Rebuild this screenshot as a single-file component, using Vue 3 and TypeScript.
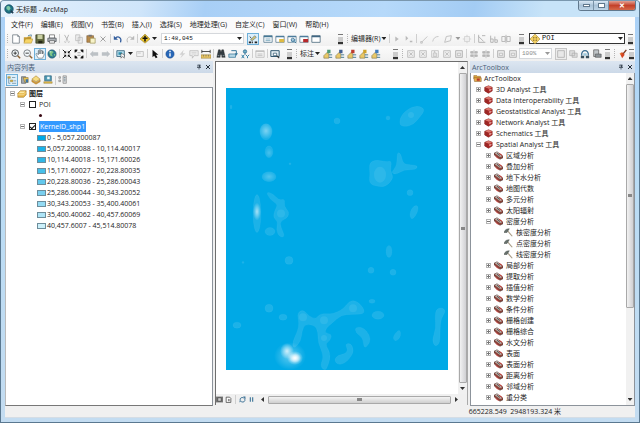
<script setup lang="ts">
import { h, ref } from 'vue'

// Each shape: [path data, fill, stroke, stroke width]
type Shape = [string, string, string?, number?]

const G = '#b9b9b9'
const cyl = (c: string): Shape[] => [
  ['M1 3h10v7H1z', '#fff', '#6b8799', 1],
  ['M1 2h10v2H1z', '#4d7c9c'],
  ['M5 6h6v4H5z', c],
]
const label = (c: string): Shape[] => [
  ['M1 8l4-4 2 2v5H1z', '#e9c867', '#80754d', 0.7],
  ['M5 1h4v4H5z', c],
  ['M7 7h4M7 10h4', 'none', '#4f7f96', 1.2],
]
const greyBox: Shape[] = [
  ['M2 2h8v8H2z', '#ededed', G, 1],
  ['M4 4l4 4M8 4L4 8', 'none', G, 1],
]
const icons: Record<string, Shape[]> = {
  new: [['M2 1h6l2 2v8H2z', '#fff', '#68727c', 0.9], ['M8 1v2h2', 'none', '#68727c', 0.8]],
  open: [['M1 4h4l1-1h4v7H1z', '#c59a30'], ['M3 6h9l-2 5H1z', '#f7d566', '#a3822d', 0.5], ['M6 2l4-1v2', 'none', '#3f7796', 0.9]],
  save: [['M1 1h10v10H1z', '#626a3f', '#35391f', 0.8], ['M3 1h6v5H3z', '#c9cfa2'], ['M4 8h5v3H4z', '#262817']],
  print: [['M3 1h6v4H3z', '#fff', '#555', 0.8], ['M1 5h10v4H1z', '#aeb3b8', '#4c5258', 0.9], ['M3 8h6v3H3z', '#f5f5f5', '#555', 0.8]],
  cut: [['M3 1l4 7M8 1L5 8', 'none', G, 1.2], ['M3 9a1 1 0 1 0 2 0M7 9a1 1 0 1 0 2 0', 'none', G, 1]],
  copy: [['M2 1h5v7H2zM5 4h5v7H5z', '#eee', G, 0.9]],
  paste: [['M1 2h8v8H1z', '#b88a4b', '#7a5a30', 0.7], ['M3 1h4v2H3z', '#777'], ['M5 5h6v6H5z', '#f7f3c9', '#8c803e', 0.7]],
  delete: [['M3 3l6 6M9 3L3 9', 'none', '#9a9a9a', 1.1]],
  undo: [['M3 5c3-3 8-1 6 5', 'none', '#335e9e', 1.5], ['M1 2v5h5z', '#335e9e']],
  redo: [['M9 5c-3-3-8-1-6 5', 'none', G, 1.2], ['M11 2v5H6z', G]],
  add: [['M6 0l6 6-6 5-6-5z', '#edc52c', '#735e1a', 0.5], ['M6 2v7M3 5h6', 'none', '#111', 1.8]],
  edit: [['M1 10h3M5 10h1M8 10h3', 'none', '#222', 2], ['M3 7l5-5 2 2-5 4z', '#d4c273', '#57717d', 0.7], ['M2 3l2 2', 'none', '#222', 1]],
  table: [['M1 2h10v8H1z', '#fff', '#5f8298', 1], ['M1 2h10v2H1z', '#447795'], ['M3 6h6M3 8h6', 'none', '#6c9eb5', 1]],
  catalog: cyl('#e0bb42'),
  search: [...cyl('#a9cbdc'), ['M5 7a2 2 0 1 0 4 0a2 2 0 1 0-4 0M9 9l2 2', 'none', '#356d93', 1]],
  toolbox: cyl('#b7292b'),
  python: [['M1 2h10v8H1z', '#fff', '#516f82', 1], ['M1 2h10v2H1z', '#3f6682']],
  zoomin: [['M1 5a4 4 0 1 0 8 0a4 4 0 1 0-8 0', '#f2f7f9', '#4d5155', 1.1], ['M8 8l3 3', 'none', '#8b6233', 1.8], ['M5 3v4M3 5h4', 'none', '#222', 1]],
  zoomout: [['M1 5a4 4 0 1 0 8 0a4 4 0 1 0-8 0', '#f2f7f9', '#6b6f73', 1], ['M8 8l3 3', 'none', '#8b6233', 1.8], ['M3 5h4', 'none', '#222', 1]],
  pan: [['M4 11L1 6l1-1 2 2V2h1v4V1h2v5V2h2v4V3h1l1 4-2 4z', '#fff', '#505b63', 0.7]],
  globe: [['M1 6a5 5 0 1 0 10 0a5 5 0 1 0-10 0', '#2f7c8f', '#1c4c6b', 0.6], ['M3 3l3-1 2 2-2 2 1 3-3-1-1-3zM8 6l2 0-1 3z', '#7cc486'], ['M3 3h2v1H3z', '#eef8f8']],
  fixin: [['M1 1l3 3M11 1L8 4M1 11l3-3M11 11L8 8', 'none', '#222', 1.2], ['M5 2v3H2zM7 2v3h3zM5 10V7H2zM7 10V7h3z', '#111']],
  fixout: [['M1 4V1h3L3 3zM11 4V1H8l1 2zM1 8v3h3L3 9zM11 8v3H8l1-2z', '#111', '#111', 0.5], ['M5 4v1M7 4v1M5 8v-1M7 8v-1', 'none', '#333', 0.9]],
  back: [['M1 6l4-4v2h6v4H5v2z', '#bcc1c5']],
  fwd: [['M11 6L7 2v2H1v4h6v2z', '#bcc1c5']],
  select: [['M1 2h9v7H1z', '#b4dbea', '#35647e', 1], ['M3 4h4v3H3z', '#2e90ad'], ['M6 5v6l2-2 2 2V7z', '#fff', '#333', 0.6]],
  clear: [['M2 3h8v6H2z', '#f2f2f2', G, 0.9], ['M3 4h4v2H3z', '#ddd']],
  cursor: [['M3 1v9l2-2 2 3 2-1-2-3h3z', '#111']],
  info: [['M1 6a5 5 0 1 0 10 0a5 5 0 1 0-10 0', '#2867b7', '#194684', 0.5], ['M6 5v4M6 2v2', 'none', '#fff', 1.7]],
  bolt: [['M8 1L3 7h3l-2 4 6-6H7z', '#d2d2d2']],
  popup: [['M1 2h10v6H6l-2 3V8H1z', '#f0f0f0', G, 0.9], ['M3 4h6M3 6h6', 'none', G, 0.6]],
  measure: [['M0 7h12v4H0z', '#e7c465', '#8f7737', 0.6], ['M1 3h10M1 1v4M11 1v4', 'none', '#333', 1], ['M3 7v2M6 7v2M9 7v2', 'none', '#665', 0.7]],
  find: [['M3 1h2l1 3 1-3h2l2 9H7V7H5v3H1z', '#333c42', '#222', 0.5], ['M2 8h2M8 8h2', 'none', '#91a2ab', 1]],
  route: [['M1 6h8v4H1z', '#b7d8e6', '#39789b', 0.9], ['M4 2h6v4', 'none', '#39789b', 1.2], ['M8 5h4l-2 3z', '#39789b']],
  xy: [['M4 3a2 2 0 1 0 4 0a2 2 0 1 0-4 0M6 5v2', '#6fb0cb', '#326e8f', 1], ['M2 7l3 4M5 7l-3 4M7 7l2 2 2-2M9 9v2', 'none', '#2576a0', 1.1]],
  time: [['M1 2h10v8H1z', '#f4f4f4', G, 0.9], ['M1 3h10M3 6h6M3 8h6', 'none', G, 1]],
  viewer: [['M1 2h10v7H1z', '#e7f1f5', '#345a72', 1.2], ['M4 5h4v3H4z', '#fff', '#345a72', 0.9], ['M8 8l3 3', 'none', '#333', 1.3]],
  lab1: label('#4d9b76'), lab2: label('#415f93'), lab3: label('#bd3b2e'), lab4: label('#cfa42b'), lab5: label('#3e7bbd'),
  gplay: [['M4 3v6l4-3z', G]],
  gplay2: [['M2 2v6l3-3z', G], ['M7 8h3v2H7z', G]],
  gline: [['M3 10L10 3M2 9h2v2H2z', 'none', '#c4c4c4', 1.1]],
  garc: [['M2 9c1-4 3-6 7-6', 'none', '#c4c4c4', 1.1]],
  gpoly: [['M2 10l2-7 6-1-1 6z', 'none', G, 1]],
  gpoint: [['M6 1v10M1 6h10', 'none', '#ccc', 1], ['M3 3h6v6H3z', '#eee', '#ccc', 0.8]],
  gverts: [['M2 1v9h8M2 3l6 6M6 2h4', 'none', '#aaa', 1]],
  gsplit: [['M2 2v8h3V6H2M7 3v7h3V7H7', 'none', '#aaa', 1]],
  gcut: [['M1 3h4v6H1zM7 3h4v6H7zM6 1v10', 'none', '#b0b0b0', 1]],
  gbox: greyBox,
  ghand: [['M2 2h8v8H2z', 'none', G, 0.9], ['M4 9V5h1V3h1v2h2v4z', '#e0e0e0', G, 0.8]],
  gframe: [['M2 2h8v8H2z', '#eee', '#aaa', 1], ['M4 5h4v3H4z', 'none', G, 1]],
  ggrid: [['M2 3h3v2H2zM7 3h3v2H7zM2 7h3v2H2zM7 7h3v2H7zM6 1v10', '#bbb', '#aaa', 0.7]],
  focus: [['M2 2h8v8H2z', '#e8e8e8', '#b0b0b0', 1]],
  layout: [['M2 2h6v6H2zM5 5h6v5H5z', '#ddd', '#aaa', 0.8]],
  driven: [['M2 8c-1-8 9-8 8 0', 'none', '#3b6f91', 1.5], ['M1 8h4v3H1zM7 8h4v3H7z', '#39505e'], ['M4 5h4v3H4z', '#9bc6d9']],
  page: [['M2 1h6v8H2z', '#c0c5c8', '#555', 0.8], ['M4 6h7v4H4z', '#8d9498', '#555', 0.7]],
  brush: [['M10 1L6 6', 'none', '#7f3c22', 1.6], ['M2 5l3-1 3 3-3 4z', '#d54420'], ['M2 5l2 0 0 2z', '#efb044']],
  tree: [['M1 2h3v2H1zM4 6h3v2H4z', '#d9b44a', '#8e7634', 0.5], ['M2 4v6h2M6 3h4M8 7h3M6 10h5', 'none', '#607f91', 0.8]],
  cylinder: [['M3 2h5v8H3z', '#a2a8ae', '#555d66', 0.8], ['M5 3h6v6H7z', '#e6c052', '#80682a', 0.6], ['M8 5h3v4H8z', '#3a74a8']],
  visible: [['M1 5l5-4 5 4-5 3z', '#f6dc80', '#a8822d', 0.7], ['M1 6l5 3 5-3v2l-5 3-5-3z', '#d99e34', '#94682a', 0.5]],
  selection: [['M2 1h8v6H2z', '#4f9cb5', '#2b5e78', 0.8], ['M1 8h10v2H1z', '#e2bc46', '#866e2e', 0.5], ['M5 2h3v3H5z', '#e9f7fb']],
  options: [['M1 2h2v2H1zM1 6h2v2H1zM6 1h4v9H6z', '#ddd', '#777', 0.7], ['M7 3h2M7 5h2M7 7h2', 'none', '#49677a', 0.7]],
  layers: [['M1 5l3-3h7v5l-3 3H1z', '#e6b445', '#956c1f', 0.6], ['M2 5l2-2h6L8 5z', '#fbe9a6'], ['M1 7h7l3-3', 'none', '#fff1bd', 0.8]],
  boxes: [['M1 2h4l1 1h4v3H1z', '#d8a33c', '#7c4a1e', 0.5], ['M1 5h10v5H2z', '#e4b14b', '#7c4a1e', 0.6], ['M5 6h4v3H5z', '#b9362a']],
  box: [['M1 3l5-2 5 2v5l-5 3-5-3z', '#b32d2b', '#6d1917', 0.6], ['M1 3l5-2 5 2-5 2z', '#dc7a70'], ['M1 3l5 2v6L1 8z', '#9c2725'], ['M7 7l3-1M8 5v3', 'none', '#f4cfc8', 0.9]],
  set: [['M0 3l4-2 8 6v2l-4 2-8-6z', '#8c4238', '#463634', 0.7], ['M1 3l3-2 7 6-3 1z', '#b8aca6'], ['M2 7l4 3M7 3l4 3', 'none', '#c72f29', 1.3], ['M4 3l4 3', 'none', '#3b3b3b', 1]],
  hammer: [['M5 4l6 7', 'none', '#a89b84', 1.5], ['M0 6c1-4 4-5 7-5L4 6z', '#66706b', '#3e4643', 0.6]],
  diamond: [['M6 0l6 6-6 6-6-6z', '#f5d264', '#8a7435', 0.6], ['M4 4h1v1H4zM7 4h1v1H7zM4 7h1v1H4zM7 7h1v1H7z', '#776126', '#776126', 0.4]],
  app: [['M1 6a5 5 0 1 0 10 0a5 5 0 1 0-10 0', '#1f7584', '#134c66', 1], ['M3 3l3-1 2 3-2 3-3-2z', '#7cc8a5'], ['M8 8l3 3', 'none', '#223f55', 2]],
  data: [['M0 1h12v10H0z', '#777'], ['M3 3h6v6H3z', '#ccc', '#333', 1]],
  sheet: [['M2 2h6l2 2v7H2z', '#fff', '#333', 1.2], ['M5 5h3v4H5z', '#888']],
  refresh: [['M2 8V5c1-3 5-3 7-1M10 4v4c-1 3-5 3-7 1', 'none', '#336b91', 1.5], ['M7 1h4v4zM1 11V8h3z', '#336b91']],
  pause: [['M4 2v8M8 2v8', 'none', '#44799b', 2]],
  pin: [['M3 2h6M4 2v5M8 2v5M2 7h8M6 7v4', 'none', '#3c4856', 1.5], ['M6 2h2v5H6z', '#3c4856']],
  close: [['M2 2l8 8M10 2l-8 8', 'none', '#25303b', 2]],
}

const Icon = (p: { name: string }) =>
  h('svg', { viewBox: '0 0 12 12', class: 'icon', 'aria-hidden': 'true' },
    (icons[p.name] ?? []).map(([d, fill, stroke, sw]) =>
      h('path', { d, fill, stroke: stroke ?? 'none', 'stroke-width': sw ?? 0 })))

const menus = ['文件(F)', '编辑(E)', '视图(V)', '书签(B)', '插入(I)', '选择(S)', '地理处理(G)', '自定义(C)', '窗口(W)', '帮助(H)']

// '|' is a separator, 'v' a drop-down arrow, a leading '*' marks a pressed button
const split = (s: string) => s.split(' ')
const standard = split('new open save print | cut copy paste delete | undo redo | add v')
const windows = split('*edit gap table catalog search toolbox python')
const editor = split('| gplay gplay2 | gline garc gpoly v gpoint | gverts gsplit gcut')
const tools = split('zoomin zoomout *pan globe | fixin fixout | back fwd | select v clear | cursor | info bolt popup measure | find route xy | time | viewer')
const labels = split('lab1 lab2 lab3 lab4 lab5')
const layoutTools = split('gbox gbox ghand gbox gframe | ggrid ggrid | gframe gframe')
const pageTools = split('*focus layout driven page')
const tocTools = split('*tree cylinder visible selection | options')

const classes = [
  ['#00a9e6', '0 - 5,057.200087'], ['#1cb3e9', '5,057.200088 - 10,114.40017'], ['#30b6e5', '10,114.40018 - 15,171.60026'],
  ['#46bfe9', '15,171.60027 - 20,228.80035'], ['#64c8ec', '20,228.80036 - 25,286.00043'], ['#7bd0ef', '25,286.00044 - 30,343.20052'],
  ['#94dbf3', '30,343.20053 - 35,400.40061'], ['#aee4f6', '35,400.40062 - 40,457.60069'], ['#ccf0fa', '40,457.6007 - 45,514.80078'],
]
const poiOn = ref(false)
const kernelOn = ref(true)

interface Node { level: number; icon: string; text: string; open?: boolean }
const n = (level: number, icon: string, text: string, open?: boolean): Node => ({ level, icon, text, open })
const nodes: Node[] = [
  ...['3D Analyst 工具', 'Data Interoperability 工具', 'Geostatistical Analyst 工具', 'Network Analyst 工具', 'Schematics 工具'].map(t => n(1, 'box', t)),
  n(1, 'box', 'Spatial Analyst 工具', true),
  ...['区域分析', '叠加分析', '地下水分析', '地图代数', '多元分析', '太阳辐射'].map(t => n(2, 'set', t)),
  n(2, 'set', '密度分析', true),
  ...['核密度分析', '点密度分析', '线密度分析'].map(t => n(3, 'hammer', t)),
  ...['局部分析', '提取分析', '插值分析', '数学分析', '条件分析', '栅格创建', '栅格综合', '水文分析', '表面', '表面分析', '距离分析', '邻域分析', '重分类'].map(t => n(2, 'set', t)),
]

// cx, cy, rx, ry of low-density patches
const patches = [
  [5, 19, 1, 2], [40, 44, 6, 8], [43, 64, 4, 6], [43, 89, 7, 5], [64, 76, 1, 1], [111, 33, 3, 3], [162, 30, 2, 2],
  [184, 105, 3, 3], [31, 126, 4, 19], [44, 144, 5, 4],
  [17, 175, 1, 1], [63, 173, 4, 4], [163, 164, 3, 6], [145, 183, 3, 3], [167, 185, 3, 3], [146, 214, 3, 2],
  [43, 221, 4, 4], [57, 230, 4, 3], [11, 238, 4, 3], [152, 228, 6, 4],
]

// Closed outline rounded through the midpoints of its corner list
const smooth = (s: string) => {
  const p = s.split(' ').map(q => q.split(',').map(Number))
  const mid = (a: number[], b: number[]) => `${(a[0] + b[0]) / 2} ${(a[1] + b[1]) / 2}`
  return 'M' + mid(p[p.length - 1], p[0]) + p.map((a, i) => `Q${a[0]} ${a[1]} ${mid(a, p[(i + 1) % p.length])}`).join('') + 'Z'
}
const blobs = [
  '173,37 175,27 185,19 194,18 199,22 194,29 187,37 179,39',
  '143,75 150,72 160,74 166,73 164,83 168,90 160,99 152,99 143,96 144,86',
  '171,64 175,66 177,76 184,77 192,78 190,82 178,82 170,87 165,85 171,78',
  '184,124 188,118 192,118 192,124 187,132 184,130',
  '40,104 47,106 53,113 59,111 58,119 63,124 62,130 54,134 55,140 59,149 54,150 50,143 52,134 47,130 49,122 52,117 44,112',
  '71,226 77,222 83,229 90,232 94,226 104,227 111,225 118,221 123,214 130,213 138,221 138,227 126,227 115,228 106,236 100,241 99,246 106,247 104,254 99,257 105,267 102,279 99,284 94,279 98,269 92,256 92,245 89,238 79,237 76,244 75,254 68,262 66,256 72,243 73,235',
  '129,240 137,240 144,248 144,256 138,262 137,251 130,246',
  '119,257 125,256 128,264 124,271 119,276 112,278 108,273 112,268 119,267 122,263',
  '210,222 216,220 220,224 215,231 214,243 214,256 209,260 206,253 210,241 209,230',
  '167,253 168,247 174,242 175,249 171,254',
]
</script>

<template>
  <div class="window">
    <header class="title">
      <Icon name="app" />
      <h1>无标题 - ArcMap</h1>
      <div class="caption">
        <button aria-label="最小化"><i class="min"></i></button>
        <button aria-label="最大化"><i class="max"></i></button>
        <button class="quit" aria-label="关闭">✕</button>
      </div>
    </header>

    <nav class="menu"><button v-for="m in menus" :key="m">{{ m }}</button></nav>

    <div class="bar first">
      <section class="group">
        <i class="grip"></i>
        <template v-for="(t, i) in standard" :key="i">
          <i v-if="t === '|'" class="sep"></i><i v-else-if="t === 'v'" class="caret"></i>
          <button v-else class="tool" :aria-label="t"><Icon :name="t" /></button>
        </template>
        <label class="combo scale">
          <select aria-label="比例"><option>1:48,045</option></select><i class="caret"></i>
        </label>
        <template v-for="(t, i) in windows" :key="'w' + i">
          <i v-if="t === 'gap'" class="gap"></i>
          <button v-else class="tool" :class="{ on: t[0] === '*' }" :aria-label="t"><Icon :name="t.replace('*', '')" /></button>
        </template>
        <i class="more"></i>
      </section>
      <section class="group">
        <i class="grip"></i>
        <button class="word">编辑器(R)<i class="caret"></i></button>
        <template v-for="(t, i) in editor" :key="i">
          <i v-if="t === '|'" class="sep"></i><i v-else-if="t === 'v'" class="caret dim"></i>
          <button v-else class="tool" :aria-label="t"><Icon :name="t" /></button>
        </template>
        <i class="more"></i>
      </section>
      <section class="group">
        <label class="combo layer">
          <Icon name="diamond" /><select aria-label="图层"><option>POI</option></select><i class="caret"></i>
        </label>
        <i class="more"></i>
      </section>
    </div>

    <div class="bar second">
      <section class="group">
        <i class="grip"></i>
        <template v-for="(t, i) in tools" :key="i">
          <i v-if="t === '|'" class="sep"></i><i v-else-if="t === 'v'" class="caret"></i>
          <button v-else class="tool" :class="{ on: t[0] === '*' }" :aria-label="t"><Icon :name="t.replace('*', '')" /></button>
        </template>
        <i class="more"></i>
      </section>
      <section class="group">
        <i class="grip"></i>
        <button class="word">标注<i class="caret"></i></button>
        <button v-for="t in labels" :key="t" class="tool" :aria-label="t"><Icon :name="t" /></button>
        <i class="more"></i>
      </section>
      <section class="group">
        <i class="grip"></i>
        <template v-for="(t, i) in layoutTools" :key="i">
          <i v-if="t === '|'" class="sep"></i>
          <button v-else class="tool" :aria-label="t"><Icon :name="t" /></button>
        </template>
        <label class="combo percent">
          <select aria-label="缩放"><option>100%</option></select><i class="caret dim"></i>
        </label>
        <button v-for="t in pageTools" :key="t" class="tool" :class="{ off: t[0] === '*' }" :aria-label="t"><Icon :name="t.replace('*', '')" /></button>
        <i class="more"></i>
      </section>
      <section class="group">
        <i class="grip"></i>
        <button class="tool" aria-label="brush"><Icon name="brush" /></button>
        <i class="more"></i>
      </section>
    </div>

    <main class="work">
      <aside class="panel toc">
        <h2>内容列表<button aria-label="固定"><Icon name="pin" /></button><button aria-label="关闭"><Icon name="close" /></button></h2>
        <div class="toctools">
          <template v-for="(t, i) in tocTools" :key="i">
            <i v-if="t === '|'" class="sep"></i>
            <button v-else class="tool" :class="{ on: t[0] === '*' }" :aria-label="t"><Icon :name="t.replace('*', '')" /></button>
          </template>
        </div>
        <div class="list">
          <div class="row"><i class="twist"></i><Icon name="layers" /><b>图层</b></div>
          <div class="row l2"><i class="twist"></i><label><input v-model="poiOn" type="checkbox" /><span>POI</span></label></div>
          <div class="row l3"><i class="dot"></i></div>
          <div class="row l2"><i class="twist"></i><label><input v-model="kernelOn" type="checkbox" /><span class="picked">KernelD_shp1</span></label></div>
          <div v-for="[c, t] in classes" :key="t" class="row l4"><i class="swatch" :style="{ background: c }"></i>{{ t }}</div>
        </div>
      </aside>

      <section class="view">
        <div class="canvas">
          <svg class="map" viewBox="0 0 222 283" preserveAspectRatio="none" role="img" aria-label="KernelD_shp1">
            <defs>
              <radialGradient id="glow"><stop offset="0" stop-color="#fff" stop-opacity=".95" /><stop offset="1" stop-color="#fff" stop-opacity="0" /></radialGradient>
            </defs>
            <rect width="222" height="283" fill="#00a9e6" />
            <g fill="#fff" fill-opacity=".11" stroke="#fff" stroke-opacity=".04">
              <ellipse v-for="(p, i) in patches" :key="i" :cx="p[0]" :cy="p[1]" :rx="p[2]" :ry="p[3]" />
              <path v-for="d in blobs" :key="d" :d="smooth(d)" />
            </g>
            <g fill="#fff" fill-opacity=".08">
              <ellipse cx="154" cy="87" rx="6" ry="8" /><circle cx="185" cy="27" r="3" /><circle cx="77" cy="230" r="4" />
              <circle cx="98" cy="233" r="4" /><circle cx="127" cy="221" r="4" /><circle cx="98" cy="251" r="3" />
              <circle cx="55" cy="126" r="4" />
            </g>
            <g fill="url(#glow)">
              <ellipse cx="40" cy="43" rx="7" ry="8" opacity=".45" /><ellipse cx="43" cy="65" rx="4" ry="5" opacity=".2" />
              <ellipse cx="43" cy="89" rx="7" ry="5" opacity=".25" /><ellipse cx="31" cy="124" rx="4" ry="9" opacity=".65" />
              <ellipse cx="64" cy="269" rx="16" ry="14" opacity=".4" /><ellipse cx="61" cy="264" rx="7" ry="8" opacity=".8" />
              <ellipse cx="69" cy="271" rx="8" ry="7" /><ellipse cx="69" cy="271" rx="6" ry="5" opacity=".8" />
            </g>
          </svg>
        </div>
        <div class="scroll vert"><button class="up" aria-label="上"></button><i class="thumb"></i><button class="down" aria-label="下"></button></div>
        <div class="foot">
          <button aria-label="数据视图"><Icon name="data" /></button><button aria-label="布局视图"><Icon name="sheet" /></button>
          <i class="sep"></i>
          <button aria-label="刷新"><Icon name="refresh" /></button><button aria-label="暂停"><Icon name="pause" /></button>
          <div class="scroll horz"><button class="left" aria-label="左"></button><i class="thumb"></i><button class="right" aria-label="右"></button></div>
        </div>
      </section>

      <aside class="panel box">
        <h2>ArcToolbox<button aria-label="固定"><Icon name="pin" /></button><button aria-label="关闭"><Icon name="close" /></button></h2>
        <div class="boxbody">
          <div class="tree">
            <div class="row"><Icon name="boxes" />ArcToolbox</div>
            <div v-for="x in nodes" :key="x.text" class="row" :class="'t' + x.level">
              <i v-if="x.level < 3" class="twist" :class="{ plus: !x.open }"></i><Icon :name="x.icon" />{{ x.text }}
            </div>
          </div>
          <div class="scroll vert short"><button class="up" aria-label="上"></button><i class="thumb"></i><button class="down" aria-label="下"></button></div>
        </div>
      </aside>
    </main>

    <footer class="status">665228.549&nbsp; 2948193.324 米</footer>
  </div>
</template>

<style>
body { margin: 0; }
</style>

<style scoped>
* { box-sizing: border-box; }
.window {
  height: 100vh; display: flex; flex-direction: column; overflow: hidden;
  padding: 0 4px 4px; border: 1px solid #5a7890; border-top-color: #7a97ae; border-radius: 4px 4px 0 0;
  background: linear-gradient(#a9d0f7, #b9dcf5 40%, #c3dcf1);
  font: 7px/11px "Open Sans", "Noto Sans CJK SC", sans-serif; color: #1d1d1d; white-space: nowrap;
}
button { font: inherit; color: inherit; padding: 0; margin: 0; border: 0; background: none; display: flex; align-items: center; justify-content: center; }
i { display: block; font-style: normal; flex: none; }
.icon { width: 10px; height: 10px; display: block; flex: none; }

.title { flex: 0 0 16px; display: flex; align-items: center; gap: 2px; margin: 0 -4px; padding-left: 3px; background: linear-gradient(100deg, #e4f1fc 0, #cfe5fa 22%, #a8cff6 32%, #b6d9fa 60%, #a3ccf4 74%, #c7e3f8 85%); }
.title h1 { margin: 0; font-size: 7px; font-weight: 400; }
.caption { margin-left: auto; margin-right: 3px; display: flex; align-self: flex-start; height: 10px; border: 1px solid #60788d; border-top: 0; border-radius: 0 0 3px 3px; overflow: hidden; }
.caption button { width: 15px; background: linear-gradient(#d9e8f5, #a9c2d8 50%, #bdd5e8); border-right: 1px solid #7891a6; }
.caption .quit { width: 26px; border: 0; color: #fff; font-size: 7px; font-weight: 700; background: linear-gradient(#e2a193, #c4412a 50%, #d5694a); }
.min { width: 7px; height: 3px; background: #fff; border: 1px solid #60788d; }
.max { width: 7px; height: 5px; background: #fff; border: 1px solid #60788d; }

.menu { flex: 0 0 14px; display: flex; align-items: center; gap: 8px; padding-left: 6px; background: #fbfbfc; }
.bar { flex: 0 0 15px; display: grid; background: linear-gradient(#fbfbfb, #f0f0f0); }
.first { grid-template-columns: 340fr 181fr 109fr; }
.second { grid-template-columns: 289fr 106fr 212fr 23fr; }
.group { display: flex; align-items: center; min-width: 0; }
.grip { width: 1px; height: 9px; margin: 0 2px; background: repeating-linear-gradient(#b5b5b5 0 1px, transparent 1px 2px); }
.sep { width: 1px; height: 9px; margin: 0 1px; background: #cfcfcf; }
.gap { width: 3px; }
.tool { width: 12px; height: 12px; flex: none; }
.on { border: 1px solid #6dafd9; background: #dceffb; }
.off { border: 1px solid #c6c6c6; background: #ececec; }
.caret { width: 5px; height: 3px; margin: 0 1px; background: #222; clip-path: polygon(0 0, 100% 0, 50% 100%); }
.dim { background: #999; }
.more { width: 5px; height: 11px; margin: 2px 2px 0 auto; background: linear-gradient(#777 0 1px, transparent 1px 3px, #ccc 3px 8px, #333 8px 10px, #ccc 10px); }
.word { height: 12px; margin: 0 1px; }
.combo { display: flex; align-items: center; height: 11px; background: #fff; border: 1px solid #d5d8dc; }
.combo select { appearance: none; flex: 1; min-width: 0; width: 0; height: 9px; padding: 0 0 0 2px; border: 0; background: none; font: 6px/9px "Liberation Mono", monospace; color: #111; outline: 0; }
.scale { flex: 0 1 83px; margin: 0 3px; }
.layer { flex: 1; margin: 0 3px; border-color: #333; }
.layer select { font-size: 7px; }
.percent { flex: 0 1 33px; margin-right: 3px; }
.percent select { color: #888; }

.work { flex: 1; min-height: 0; display: grid; grid-template-columns: 208fr 257fr 165fr; background: #f0f0f0; }
.panel { min-width: 0; min-height: 0; display: flex; flex-direction: column; }
.panel h2 { flex: 0 0 12px; margin: 0; padding: 0 2px; display: flex; align-items: center; gap: 3px; font-size: 7px; font-weight: 400; color: #4b5f78; background: linear-gradient(#dce6f1, #ccd9e8); }
.panel h2 button:first-of-type { margin-left: auto; }
.panel h2 .icon { width: 6px; height: 6px; }
.toctools { flex: 0 0 14px; display: flex; align-items: center; padding-left: 1px; background: #f4f4f4; }
.list { flex: 1; border: 1px solid #8c939b; border-left-color: #bbb; border-bottom-color: #777; background: #fff; }
.row { height: 11px; display: flex; align-items: center; gap: 3px; padding-left: 4px; }
.list .icon { margin: 0 -1px; }
.l2 { padding-left: 14px; }
.l3 { padding-left: 33px; }
.l4 { padding-left: 31px; gap: 1px; }
.row label { display: flex; align-items: center; gap: 2px; }
.row input { appearance: none; width: 7px; height: 7px; margin: 0 1px; border: 1px solid #222; background: #fff; display: grid; place-items: center; }
.row input:checked::before { content: ""; width: 4px; height: 2px; border: solid #111; border-width: 0 0 1px 1px; transform: rotate(-45deg); }
.picked { padding: 0 1px; line-height: 11px; color: #fff; background: #3399ff; }
.dot { width: 3px; height: 3px; border-radius: 2px; background: #3b0a14; }
.swatch { width: 9px; height: 6px; border: 1px solid #6d8d9b; }
.twist { width: 5px; height: 5px; border: 1px solid #b5b5b5; background: linear-gradient(#777, #777) center / 3px 1px no-repeat #fff; }
.plus { background: linear-gradient(#777, #777) center / 3px 1px no-repeat, linear-gradient(#777, #777) center / 1px 3px no-repeat #fff; }

.view { min-width: 0; min-height: 0; display: grid; grid-template: 1fr 11px / 1fr 9px; margin: 0 2px 1px; border: 1px solid #6e6e6e; border-right-color: #aaa; border-bottom: 0; }
.canvas { min-height: 0; display: flex; padding: 26px 10px 24px; background: #fff; }
.map { width: 100%; height: 100%; display: block; }
.foot { grid-column: 1 / -1; display: flex; align-items: center; gap: 2px; padding-right: 9px; background: #f0f0f0; }
.foot .icon { width: 7px; height: 7px; }
.scroll { display: flex; align-items: center; background: #f1f1f1; }
.scroll button { flex: none; width: 5px; height: 3px; background: #333; }
.thumb { border: 1px solid #a9a9a9; border-radius: 1px; }
.vert { flex-direction: column; padding: 4px 0; gap: 4px; }
.vert .thumb { flex: 1; width: 8px; background: linear-gradient(#888, #888) center / 4px 3px no-repeat, linear-gradient(90deg, #f2f2f2, #d0d0d3); }
.short .thumb { flex: 0 1 69%; }
.short .down { margin-top: auto; }
.up { clip-path: polygon(50% 0, 100% 100%, 0 100%); }
.down { clip-path: polygon(0 0, 100% 0, 50% 100%); }
.horz { flex: 1; gap: 4px; margin-left: 4px; }
.horz .thumb { flex: 1; height: 8px; background: linear-gradient(#888, #888) center / 5px 3px no-repeat, linear-gradient(#f3f3f3, #cfcfcf); }
.scroll .left, .scroll .right { width: 3px; height: 5px; }
.left { clip-path: polygon(0 50%, 100% 0, 100% 100%); }
.right { clip-path: polygon(100% 50%, 0 0, 0 100%); }

.boxbody { flex: 1; min-height: 0; display: flex; border: 1px solid #8c939b; border-top: 0; background: #fff; }
.tree { flex: 1; min-width: 0; overflow: hidden; }
.tree .row { padding-left: 2px; gap: 2px; }
.tree .icon { width: 9px; height: 9px; }
.tree .t1 { padding-left: 5px; gap: 3px; }
.tree .t2 { padding-left: 15px; gap: 3px; }
.tree .t3 { padding-left: 33px; gap: 3px; }

.status { flex: 0 0 12px; display: flex; align-items: center; justify-content: flex-end; padding-right: 74px; background: #f0f0f0; border-bottom: 1px solid #d5dde5; }
</style>
